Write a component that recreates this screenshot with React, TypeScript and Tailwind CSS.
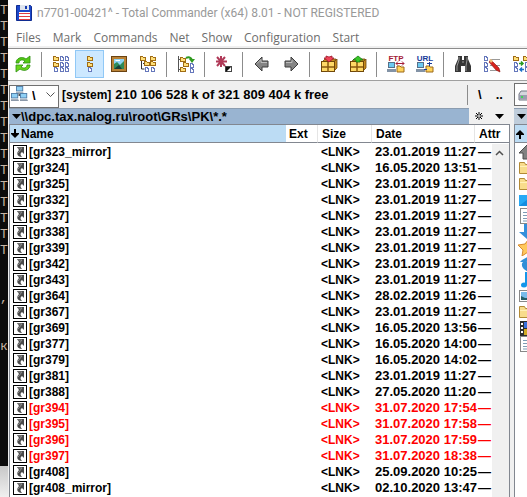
import type { ReactNode } from 'react';

const consoleLines: string[] = [
  ...Array.from({ length: 16 }, () => 'T'),
  '', '', ',', '', '', 'к',
];

const menus = ['Files', 'Mark', 'Commands', 'Net', 'Show', 'Configuration', 'Start'];

type Entry = { name: string; date: string; marked?: boolean };

const entries: Entry[] = [
  { name: '[gr323_mirror]', date: '23.01.2019 11:27' },
  { name: '[gr324]', date: '16.05.2020 13:51' },
  { name: '[gr325]', date: '23.01.2019 11:27' },
  { name: '[gr332]', date: '23.01.2019 11:27' },
  { name: '[gr337]', date: '23.01.2019 11:27' },
  { name: '[gr338]', date: '23.01.2019 11:27' },
  { name: '[gr339]', date: '23.01.2019 11:27' },
  { name: '[gr342]', date: '23.01.2019 11:27' },
  { name: '[gr343]', date: '23.01.2019 11:27' },
  { name: '[gr364]', date: '28.02.2019 11:26' },
  { name: '[gr367]', date: '23.01.2019 11:27' },
  { name: '[gr369]', date: '16.05.2020 13:56' },
  { name: '[gr377]', date: '16.05.2020 14:00' },
  { name: '[gr379]', date: '16.05.2020 14:02' },
  { name: '[gr381]', date: '23.01.2019 11:27' },
  { name: '[gr388]', date: '27.05.2020 11:20' },
  { name: '[gr394]', date: '31.07.2020 17:54', marked: true },
  { name: '[gr395]', date: '31.07.2020 17:58', marked: true },
  { name: '[gr396]', date: '31.07.2020 17:59', marked: true },
  { name: '[gr397]', date: '31.07.2020 18:38', marked: true },
  { name: '[gr408]', date: '25.09.2020 10:25' },
  { name: '[gr408_mirror]', date: '02.10.2020 13:47' },
];

function Icon({ children, w = 18, h = 18 }: { children: ReactNode; w?: number; h?: number }) {
  return (
    <svg width={w} height={h} viewBox={`0 0 ${w} ${h}`} className="shrink-0" aria-hidden="true">
      {children}
    </svg>
  );
}

/* Small glyphs that several toolbar icons share */
function MiniFolder({ x, y }: { x: number; y: number }) {
  return (
    <g transform={`translate(${x} ${y})`} shapeRendering="crispEdges">
      <path d="M0 0h3v1h3v4H0z" fill="#a06c14" />
      <path d="M1 1h2v1h2v2H1z" fill="#ffdf78" />
    </g>
  );
}

function MiniFile({ x, y }: { x: number; y: number }) {
  return (
    <g transform={`translate(${x} ${y})`} shapeRendering="crispEdges">
      <path d="M0 0h3v1h1v4H0z" fill="#6678bc" />
      <path d="M1 1h1v1h1v2H1z" fill="#fff" />
    </g>
  );
}

function MiniComputer({ x, y }: { x: number; y: number }) {
  return (
    <g transform={`translate(${x} ${y})`}>
      <rect x="0.5" y="0.5" width="7" height="5" fill="#8fd0f5" stroke="#4d7ba6" />
      <path d="M0 7h8l1 2H0z" fill="#8b98a8" />
    </g>
  );
}

function RefreshIcon() {
  return (
    <Icon>
      <path d="M2 8C2 3 8 1 12 4l4-3v7H9l2-2C8 4 5 5 5 8z" fill="#55ca16" stroke="#2c8f10" strokeWidth=".8" />
      <path d="M16 10c0 5-6 7-10 4l-4 3v-7h7l-2 2c3 2 6 1 6-2z" fill="#6ad51d" stroke="#2c8f10" strokeWidth=".8" />
    </Icon>
  );
}

function BriefIcon() {
  return (
    <Icon>
      {[1, 7, 12].map((y, i) => (
        <g key={y}>
          {i < 2 ? <MiniFolder x={1} y={y} /> : <MiniFile x={2} y={y} />}
          <MiniFile x={8} y={y} />
          <MiniFile x={13} y={y} />
        </g>
      ))}
    </Icon>
  );
}

function FullIcon() {
  return (
    <Icon>
      <MiniFolder x={6} y={1} />
      <MiniFolder x={6} y={7} />
      <MiniFile x={7} y={12} />
    </Icon>
  );
}

function ThumbnailIcon() {
  return (
    <Icon>
      <rect x="1.5" y="1.5" width="15" height="15" fill="#b98236" stroke="#6b4312" />
      <rect x="4" y="4" width="10" height="10" fill="#8fd3f5" />
      <path d="M4 9l3-2 3 3 4-4v8H4z" fill="#2f8a58" />
      <path d="M4 14l5-4 3 4z" fill="#173f3a" />
      <path d="M6 5h4v1H5z" fill="#fff" />
    </Icon>
  );
}

function TreeIcon() {
  return (
    <Icon>
      <path d="M2.500 5v9h3M4 8.500h3" fill="none" stroke="#333" />
      <MiniFolder x={1} y={1} />
      <MiniFolder x={5} y={6} />
      <MiniFile x={6} y={12} />
      <MiniFolder x={11} y={1} />
      <MiniFolder x={11} y={6} />
      <MiniFile x={12} y={12} />
    </Icon>
  );
}

function BranchIcon() {
  return (
    <Icon>
      <path d="M1.500 1v16M2 4.500h3M2 14.500h3M8 10h3" fill="none" stroke="#555" />
      <MiniFolder x={3} y={2} />
      <MiniFolder x={6} y={7} />
      <MiniFolder x={3} y={12} />
      <MiniFile x={13} y={8} />
      <MiniFile x={13} y={13} />
      <path d="M9 3q4-2 6 2" fill="none" stroke="#2f9a1e" strokeWidth="2" />
      <path d="M12 4h6l-3 4z" fill="#2f9a1e" />
    </Icon>
  );
}

function InvertIcon() {
  return (
    <Icon>
      <path d="M6 1v11M1 6.500h11M2 2l8 9M10 2l-8 9" stroke="#b03a58" strokeWidth="2" />
      <rect x="10.500" y="11.500" width="6" height="5" fill="#fff" stroke="#444" />
      <path d="M11 12h5l-5 5z" fill="#111" />
    </Icon>
  );
}

function ArrowIcon({ flip = false }: { flip?: boolean }) {
  return (
    <Icon>
      <path
        d={flip ? 'M16 9L9 2v4H3v6h6v4z' : 'M2 9l7-7v4h6v6H9v4z'}
        fill="#858585"
        stroke="#3d3d3d"
      />
      <path d={flip ? 'M4 7.500h6V5' : 'M4 8.500l4-4v3h6'} fill="none" stroke="#bdbdbd" />
    </Icon>
  );
}

function PackageIcon({ unpack = false }: { unpack?: boolean }) {
  return (
    <Icon>
      <path d="M2 7l3-3h11l-2 3zM14 7l3-3v9l-3 3z" fill="#c58a1e" stroke="#70480a" strokeWidth=".8" />
      <rect x="1.500" y="6.500" width="13" height="10" fill="#ffd967" stroke="#70480a" />
      <path d="M8 7v10M2 12h12" stroke="#8a5a10" strokeWidth="1.500" />
      {unpack ? (
        <path d="M9 1l5 4h-3v2H7V5H4z" fill="#39c727" stroke="#167c12" strokeWidth=".8" />
      ) : (
        <path d="M6 1l3 1 3-1v2h2L9 7 4 3h2z" fill="#f04458" stroke="#a01628" strokeWidth=".8" />
      )}
    </Icon>
  );
}

function NetworkIcon({ label }: { label: 'FTP' | 'URL' }) {
  const color = label === 'FTP' ? '#a51d39' : '#173b9b';
  return (
    <Icon w={20} h={20}>
      <text x="10" y="7" textAnchor="middle" fontFamily="Liberation Sans" fontSize="8" fontWeight="700" fill={color}>
        {label}
      </text>
      <rect x="2.500" y="8.500" width="6" height="5" fill="#6ccaf2" stroke="#56708a" />
      <path d="M1 15h9v3H1z" fill="#8393a6" />
      <path d="M11 12h3l1 1h3v5h-7z" fill="#ffd35a" stroke="#9b681b" />
      {label === 'FTP' ? (
        <path d="M10 9.500h8M12 7.500l-2 2 2 2M16 7.500l2 2-2 2" fill="none" stroke={color} />
      ) : (
        <path d="M9 15.500h3M14.500 8v4M12 9.500h5" fill="none" stroke={color} />
      )}
    </Icon>
  );
}

function BinocularsIcon() {
  return (
    <Icon>
      <path d="M4 1h4v4h2V1h4v3l3 7v6h-6v-6H7v6H1v-6l3-7z" fill="#363636" />
      <path d="M5 2v3l-2 6v5M13 2v3l-1 6v5M8 7h2" fill="none" stroke="#969696" />
    </Icon>
  );
}

function RenameIcon() {
  return (
    <Icon>
      <MiniFile x={1} y={1} />
      <MiniFile x={1} y={7} />
      <MiniFile x={1} y={12} />
      <path d="M7 4.500h10M7 10.500h10M7 15.500h10" stroke="#999" />
      <path d="M8 5l8 8 1 4-4-2-7-8z" fill="#d6241d" stroke="#8c1510" strokeWidth=".6" />
      <path d="M6 5l2-1 2 2-2 2z" fill="#efbd79" />
    </Icon>
  );
}

function SyncIcon() {
  return (
    <Icon>
      <MiniFolder x={1} y={1} />
      <MiniFolder x={11} y={1} />
      <MiniFile x={2} y={7} />
      <MiniFile x={13} y={7} />
      <MiniFile x={2} y={12} />
      <MiniFile x={13} y={12} />
      <path d="M7 8.500h4M9 6.500l2 2-2 2" fill="none" stroke="#2a9920" strokeWidth="1.500" />
      <path d="M12 14.500H8M10 12.500l-2 2 2 2" fill="none" stroke="#1c70c8" strokeWidth="1.500" />
    </Icon>
  );
}

type Tool = { label: string; icon: ReactNode; active?: boolean };

const toolGroups: Tool[][] = [
  [{ label: 'Reread source', icon: <RefreshIcon /> }],
  [
    { label: 'Brief view', icon: <BriefIcon /> },
    { label: 'Full view', icon: <FullIcon />, active: true },
    { label: 'Thumbnails', icon: <ThumbnailIcon /> },
    { label: 'Tree', icon: <TreeIcon /> },
  ],
  [{ label: 'Branch view', icon: <BranchIcon /> }],
  [{ label: 'Invert selection', icon: <InvertIcon /> }],
  [
    { label: 'Back', icon: <ArrowIcon /> },
    { label: 'Forward', icon: <ArrowIcon flip /> },
  ],
  [
    { label: 'Pack', icon: <PackageIcon /> },
    { label: 'Unpack', icon: <PackageIcon unpack /> },
  ],
  [
    { label: 'FTP connect', icon: <NetworkIcon label="FTP" /> },
    { label: 'FTP new connection', icon: <NetworkIcon label="URL" /> },
  ],
  [
    { label: 'Search', icon: <BinocularsIcon /> },
    { label: 'Multi-rename', icon: <RenameIcon /> },
    { label: 'Synchronize', icon: <SyncIcon /> },
  ],
];

function Toolbar() {
  return (
    <div role="toolbar" className="flex h-[33px] shrink-0 items-start overflow-hidden border-y border-[#8c8c8c] border-b-[#a0a0a0] bg-white pt-px">
      {toolGroups.map((group, i) => (
        <div key={group[0].label} className="flex shrink-0 items-center">
          {i > 0 && (
            <div className="flex w-[9px] justify-center">
              <div className="h-[25px] w-px bg-[#8c8c8c]" />
            </div>
          )}
          {group.map((tool) => (
            <button
              key={tool.label}
              type="button"
              aria-label={tool.label}
              className={
                tool.active
                  ? 'flex h-7 w-[29px] items-center justify-center border border-[#90c8f6] bg-[#cce8ff]'
                  : 'flex h-7 w-[29px] items-center justify-center'
              }
            >
              {tool.icon}
            </button>
          ))}
        </div>
      ))}
    </div>
  );
}

function LinkIcon() {
  return (
    <Icon w={14} h={14}>
      <rect x=".5" y=".5" width="13" height="13" fill="#fff" stroke="#000" />
      <path d="M4 2h7v7L9 7C7 8 7 10 9 12 4 12 3 8 6 5z" fill="#4a4a4a" />
      <path d="M5 3h4L5 8" fill="none" stroke="#8f8f8f" />
    </Icon>
  );
}

function SortArrow({ up = false }: { up?: boolean }) {
  return (
    <svg width="8" height="10" viewBox="0 0 8 10" className="shrink-0" aria-hidden="true">
      <path d={up ? 'M4 1l4 4v1H5v4H3V6H0V5z' : 'M4 9L0 5V4h3V0h2v4h3v1z'} fill="#000" />
    </svg>
  );
}

function DownTriangle() {
  return (
    <svg width="9" height="5" viewBox="0 0 9 5" className="shrink-0" aria-hidden="true">
      <path d="M0 0h9L4.500 5z" fill="#000" />
    </svg>
  );
}

function DriveBar() {
  return (
    <div className="flex h-[27px] shrink-0 items-center pl-px">
      <div className="relative h-[23px] w-[50px] shrink-0">
        <select
          aria-label="Drive"
          className="h-full w-full appearance-none border border-[#707070] bg-white pl-[22px] text-[13px] font-bold leading-5"
        >
          <option>\</option>
        </select>
        <span className="pointer-events-none absolute left-0.5 top-[3px]">
          <Icon w={17} h={16}>
            <path d="M8.500 7v3M4 11v-2h9v2" fill="none" stroke="#555" />
            <g transform="translate(5 0) scale(.9)"><MiniComputer x={0} y={0} /></g>
            <g transform="translate(0 7) scale(.9)"><MiniComputer x={0} y={0} /></g>
            <g transform="translate(9 7) scale(.9)"><MiniComputer x={0} y={0} /></g>
          </Icon>
        </span>
        <svg width="9" height="6" viewBox="0 0 9 6" className="pointer-events-none absolute right-1 top-[9px]" aria-hidden="true">
          <path d="M.5 .5l4 4 4-4" fill="none" stroke="#555" />
        </svg>
      </div>
      <div className="flex min-w-0 flex-1 items-center gap-1 overflow-hidden whitespace-nowrap pl-[3px] font-bold">
        <span className="text-[12px]">[system]</span>
        <span className="text-[13px]">210 106 528 k of 321 809 404 k free</span>
      </div>
      <div className="flex h-5 w-[42px] shrink-0 items-center border-l border-[#8c8c8c] pl-0.5 text-[13px] font-bold">
        <button type="button" aria-label="Root" className="w-5">\</button>
        <button type="button" aria-label="Parent directory" className="w-5">..</button>
      </div>
    </div>
  );
}

function PathBar() {
  return (
    <div className="flex h-4 shrink-0">
      <div className="flex min-w-0 flex-1 items-center overflow-hidden whitespace-nowrap border-t border-[#8c9db0] bg-[#99b4d1] pl-[3px] text-[13px] font-bold">
        <DownTriangle />
        <span>\\dpc.tax.nalog.ru\root\GRs\PK\*.*</span>
      </div>
      <div className="flex w-10 shrink-0 items-center">
        <button type="button" aria-label="Favorites" className="flex w-5 justify-center">
          <svg width="8" height="8" viewBox="0 0 8 8" aria-hidden="true">
            <path d="M4 0v8M0 4h8M1 1l6 6M7 1L1 7" stroke="#000" />
            <circle cx="4" cy="4" r="1" fill="#f0f0f0" />
          </svg>
        </button>
        <button type="button" aria-label="History" className="flex w-5 justify-center">
          <DownTriangle />
        </button>
      </div>
    </div>
  );
}

function FileList() {
  return (
    <div className="relative min-h-0 flex-1 overflow-hidden border-l border-t border-[#828790] bg-white">
      <table className="w-full table-fixed border-separate border-spacing-0 text-left text-[12px] font-bold leading-4">
        <colgroup>
          <col />
          <col className="w-8" />
          <col className="w-[54px]" />
          <col className="w-[103px]" />
          <col className="w-[34px]" />
        </colgroup>
        <thead>
          <tr className="h-[18px]">
            <th className="border-b border-[#828790] bg-[#bcdcf4] p-0">
              <div className="flex items-center gap-0.5 pl-px">
                <SortArrow />
                Name
              </div>
            </th>
            <th className="border-b border-r border-[#828790] border-r-[#e5e5e5] p-0 pl-[3px]">Ext</th>
            <th className="border-b border-r border-[#828790] border-r-[#e5e5e5] p-0 pl-1">Size</th>
            <th className="border-b border-r border-[#828790] border-r-[#e5e5e5] p-0 pl-1">Date</th>
            <th className="border-b border-[#828790] p-0 pl-1">Attr</th>
          </tr>
        </thead>
        <tbody>
          <tr aria-hidden="true"><td className="h-px p-0" colSpan={5} /></tr>
          {entries.map((e) => (
            <tr key={e.name} className={e.marked ? 'h-4 text-[#ff0000]' : 'h-4 text-black'}>
              <td className="p-0">
                <div className="flex h-4 items-center gap-0.5 pl-[3px]">
                  <LinkIcon />
                  {e.name}
                </div>
              </td>
              <td className="p-0" />
              <td className="p-0 pl-[3px]">&lt;LNK&gt;</td>
              <td className="whitespace-nowrap p-0 pl-[3px] text-[13px] leading-4">{e.date}</td>
              <td className="p-0 pl-[3px] text-[13px] leading-4">—</td>
            </tr>
          ))}
        </tbody>
      </table>
      <div className="absolute bottom-0 right-0 top-[19px] w-[17px] bg-[#f0f0f0]">
        <button type="button" aria-label="Scroll up" className="flex h-[17px] w-full items-center justify-center pr-0.5">
          <svg width="9" height="6" viewBox="0 0 9 6" aria-hidden="true">
            <path d="M1 5l3.500-3.500L8 5" fill="none" stroke="#505050" strokeWidth="1.500" />
          </svg>
        </button>
      </div>
    </div>
  );
}

function FolderGlyph() {
  return (
    <Icon w={16} h={16}>
      <path d="M1.500 2.500h5l1 2h8v9h-14z" fill="#f8dc8c" stroke="#b28a36" />
      <path d="M2 6h13v1H2z" fill="#fff0b8" />
    </Icon>
  );
}

function DocGlyph() {
  return (
    <Icon w={16} h={16}>
      <rect x="2.500" y=".5" width="12" height="15" fill="#fff" stroke="#888" />
      <path d="M5 4.500h8M5 7.500h8M5 10.500h8M5 13h8" stroke="#7e9bb5" />
    </Icon>
  );
}

const neighbourIcons: ReactNode[] = [
  <Icon w={16} h={16}><path d="M9 1l8 8h-4v6H5V9H1z" fill="#818181" stroke="#4d4d4d" /></Icon>,
  <FolderGlyph />,
  <FolderGlyph />,
  <Icon w={16} h={16}><path d="M1 3h15v11H1z" fill="#168de0" /><path d="M1 14L15 3H1z" fill="#27a9f5" /></Icon>,
  <DocGlyph />,
  <Icon w={16} h={16}><path d="M6 0h7v8h5l-8 8-9-8h5z" fill="#348fdb" /></Icon>,
  <Icon w={16} h={16}><path d="M10 0l3 6h6l-5 4 2 6-6-4-6 4 1-6-5-5 7-1z" fill="#ffc85c" stroke="#d78a2d" /></Icon>,
  <Icon w={16} h={16}><path d="M4 4l7-4v4c-3 0-3 3 1 4v8C5 15 2 9 5 6H2z" fill="#318fd7" /></Icon>,
  <Icon w={16} h={16}><ellipse cx="6" cy="13" rx="3" ry="2.500" fill="#1496ea" /><path d="M8 13V0c0 4 4 4 5 8" fill="none" stroke="#1496ea" strokeWidth="2" /></Icon>,
  <Icon w={16} h={16}><rect x="1.500" y="2.500" width="15" height="11" fill="#fff" stroke="#888" /><path d="M3 4h12v7H3z" fill="#78bbea" /><path d="M3 8l4 2h8v2H3z" fill="#245e67" /></Icon>,
  <FolderGlyph />,
  <Icon w={16} h={16}><path d="M2 1h14v15H2z" fill="#2d2d2d" /><path d="M6 2h10v6H6z" fill="#3870dd" /><path d="M6 9h10v6H6z" fill="#d0aa25" /><path d="M3 3h2v2H3zM3 7h2v2H3zM3 11h2v2H3z" fill="#fff" /></Icon>,
  <DocGlyph />,
];

function RightPanel() {
  return (
    <section aria-label="Right panel" className="flex w-[13px] shrink-0 flex-col overflow-hidden">
      <div className="flex h-[27px] shrink-0 items-center">
        <div className="flex h-[23px] w-[50px] shrink-0 items-center border border-[#707070] bg-white pl-[3px]">
          <Icon w={16} h={16}>
            <path d="M3 4h12v3l1 1v5H1V7z" fill="#d4d6dd" stroke="#737784" />
            <path d="M1 8h14v4H1z" fill="#9a9daf" />
            <path d="M3 9h2v2H3z" fill="#42d35b" />
          </Icon>
        </div>
      </div>
      <div className="flex h-4 w-[50px] shrink-0 items-center border-t border-[#8c9db0] bg-[#bfcddb] pl-[3px]">
        <DownTriangle />
      </div>
      <div className="flex min-h-0 w-[50px] flex-1 flex-col border-l border-t border-[#828790] bg-white">
        <div className="flex h-[18px] shrink-0 items-center border-b border-[#828790] bg-[#bcdcf4] pl-px">
          <SortArrow up />
        </div>
        <ul className="pl-[3px] pt-px">
          {neighbourIcons.map((icon, i) => (
            <li key={i} className="flex h-4">{icon}</li>
          ))}
        </ul>
      </div>
    </section>
  );
}

export default function App() {
  return (
    <div className="flex h-screen overflow-hidden bg-[#f0f0f0] font-['Liberation_Sans',Arial,sans-serif] text-black">
      <div className="flex w-2 shrink-0 flex-col overflow-hidden">
        <div className="flex-1 bg-[#0c0c0c] pt-[3px] font-['Liberation_Mono',monospace] text-[13px] leading-4 text-[#c5b5a6]">
          {consoleLines.map((line, i) => (
            <div key={i} className="h-4">{line}</div>
          ))}
        </div>
        <div className="h-[31px] shrink-0 bg-gradient-to-b from-[#c8c8c8] to-[#f0f0f0]" />
      </div>
      <main className="flex min-w-0 flex-1 flex-col">
        <header className="flex h-[25px] shrink-0 items-center gap-[5px] overflow-hidden whitespace-nowrap bg-white pl-2 font-[Roboto,'Open_Sans',sans-serif] text-[12px] text-[#999]">
          <Icon w={16} h={16}>
            <path d="M.5 .5h14l1 1v14H.5z" fill="#1c48ca" stroke="#102c91" />
            <rect x="4" y="0" width="9" height="5" fill="#dfe5ee" />
            <rect x="9" y="1" width="2" height="3" fill="#183baf" />
            <rect x="3" y="7" width="11" height="8" fill="#fff" />
            <path d="M3 8.500h11M3 11.500h11M3 14.500h11" stroke="#e13c43" />
          </Icon>
          <h1>n7701-00421^ - Total Commander (x64) 8.01 - NOT REGISTERED</h1>
        </header>
        <nav className="flex h-[21px] shrink-0 items-center gap-3 bg-white pl-2 pt-1 font-['Open_Sans','Noto_Sans',sans-serif] text-[12px] text-[#6d6d6d]">
          {menus.map((m) => (
            <button key={m} type="button">{m}</button>
          ))}
        </nav>
        <div className="h-0.5 shrink-0 bg-[#f0f0f0]" />
        <Toolbar />
        <div className="flex min-h-0 flex-1">
          <section aria-label="Left panel" className="flex min-w-0 flex-1 flex-col">
            <DriveBar />
            <div className="flex min-h-0 flex-1 flex-col pl-px">
              <PathBar />
              <FileList />
            </div>
          </section>
          <div className="mt-[43px] w-[5px] shrink-0 border-l border-[#828790]" />
          <RightPanel />
        </div>
      </main>
    </div>
  );
}
